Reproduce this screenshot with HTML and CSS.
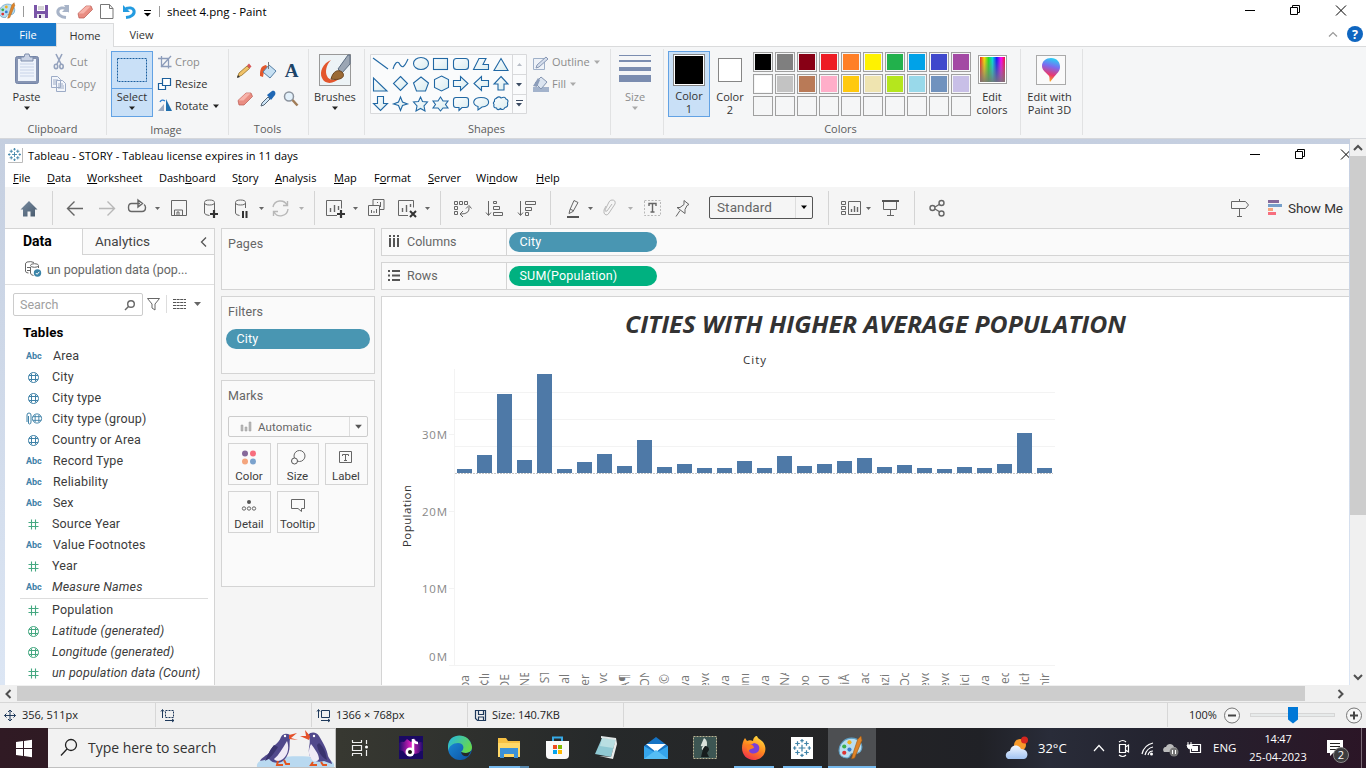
FILE: index.html
```html
<!DOCTYPE html>
<html lang="en">
<head>
<meta charset="utf-8">
<title>sheet 4.png - Paint</title>
<link rel="stylesheet" href="styles.css">
</head>
<body>
<svg class="defs" width="0" height="0">
  <defs>
    <linearGradient id="shapeFill" x1="0" y1="0" x2="1" y2="1"><stop offset="0" stop-color="#fdfeff"/><stop offset="1" stop-color="#d9ecef"/></linearGradient>
    <linearGradient id="rainbow" gradientUnits="userSpaceOnUse" x1="980" x2="1005" y1="0" y2="0"><stop offset="0" stop-color="#e22"/><stop offset=".17" stop-color="#fd0"/><stop offset=".34" stop-color="#2d2"/><stop offset=".5" stop-color="#0dd"/><stop offset=".67" stop-color="#11f"/><stop offset=".84" stop-color="#f0f"/><stop offset="1" stop-color="#e13"/></linearGradient>
    <linearGradient id="greyFade" x1="0" y1="0" x2="0" y2="1"><stop offset="0" stop-color="#888" stop-opacity="0"/><stop offset="1" stop-color="#777" stop-opacity=".9"/></linearGradient>
    <linearGradient id="drop" x1=".6" y1="0" x2=".4" y2="1"><stop offset="0" stop-color="#26d3f5"/><stop offset=".35" stop-color="#7b6cf0"/><stop offset=".7" stop-color="#e8386f"/><stop offset="1" stop-color="#fdb913"/></linearGradient>
    <linearGradient id="home" x1="0" y1="0" x2="1" y2="1"><stop offset="0" stop-color="#7b8ea3"/><stop offset="1" stop-color="#46586b"/></linearGradient>
    <linearGradient id="edgeA" x1="0" y1="0" x2="1" y2=".5"><stop offset="0" stop-color="#23b6e8"/><stop offset="1" stop-color="#66d84f"/></linearGradient>
    <linearGradient id="edgeB" x1="0" y1="0" x2="1" y2="1"><stop offset="0" stop-color="#1c8fdc"/><stop offset="1" stop-color="#0c4fa0"/></linearGradient>
    <linearGradient id="fox" x1=".8" y1="0" x2=".3" y2="1"><stop offset="0" stop-color="#ffe141"/><stop offset=".5" stop-color="#ff8a1e"/><stop offset="1" stop-color="#f0304c"/></linearGradient>
    <linearGradient id="cloud" x1="0" y1="0" x2="0" y2="1"><stop offset="0" stop-color="#f2f7ff"/><stop offset="1" stop-color="#a2c3f1"/></linearGradient>
    <linearGradient id="music"><stop offset="0" stop-color="#1d0b6b"/><stop offset=".5" stop-color="#e01fc0"/><stop offset="1" stop-color="#1d0b6b"/></linearGradient>
    <symbol id="caret" viewBox="0 0 8 5"><path d="M1 .5h6L4 4z"/></symbol>
    <symbol id="globe" viewBox="0 0 13 13"><g fill="none" stroke="currentColor"><circle cx="6.500" cy="6.500" r="5"/><path d="M4.500 2.500v8M8.500 2.500v8M2 4.500h9M2 8.500h9"/></g></symbol>
    <symbol id="hash" viewBox="0 0 13 13"><path d="M4.500 1.500v10M8.500 1.500v10M1.500 4.500h10M1.500 8.500h10" fill="none" stroke="currentColor" stroke-width="1.100"/></symbol>
    <symbol id="palette" viewBox="0 0 24 24"><path d="M13 3C6 3 1 9 1 15c0 5 4 7 8 7 3 0 2-3 4-4 3-1 7 1 9-3 3-6-2-12-9-12z" fill="#b9ddf0" stroke="#5d9dc2"/><circle cx="6" cy="11" r="2" fill="#3caf4a"/><circle cx="11" cy="7" r="2" fill="#f2b01e"/><circle cx="6" cy="17" r="2" fill="#d33"/><circle cx="11" cy="14" r="2" fill="#357fd0"/><path d="M19 4l3-3 1 4-7 17-3 1 1-4z" fill="#df8429" stroke="#9a5a17" stroke-width=".6"/></symbol>
    <symbol id="tab" viewBox="0 0 16 16"><path d="M8 5v6M5 8h6M8 0v3M6.500 1.500h3M8 13v3M6.500 14.500h3M0 8h3M1.500 6.500v3M13 8h3M14.500 6.500v3M4 2v4M2 4h4M12 2v4M10 4h4M4 10v4M2 12h4M12 10v4M10 12h4" fill="none" stroke="#3f83a8" stroke-width="1.100"/></symbol>
    <symbol id="eraser" viewBox="0 0 16 14"><path d="M1 8.500L9 1h5l1.500 3.500L7 13H2z" fill="#e98d82" stroke="#b9574f" stroke-width=".7"/><path d="M1.500 8.500L9 1.300h4.700L6.500 8.500z" fill="#f7b3aa"/></symbol>
  </defs>
</svg>

<header class="titlebar">
  <svg width="165" height="23" viewBox="0 0 165 23">
    <use href="#palette" x="-2" y="2" width="18" height="17"/>
    <path d="M23.500 6v11M159.500 6v11" stroke="#999"/>
    <path d="M34 5h14v13H34z" fill="#7a55a8"/><path d="M37 5h8v6h-8z" fill="#fff"/><path d="M38 7h6M38 9h6" stroke="#aaa"/><path d="M37 14h8v4h-8z" fill="#e8e8ee"/><path d="M39 15h2v3h-2z" fill="#503570"/>
    <path d="M66 17.500c-5-.5-9-3-8-7 1-3 5-3 8-2" fill="none" stroke="#a8b4c8" stroke-width="3"/><path d="M64 5h5v8z" fill="#a8b4c8"/><path d="M62 12h7V5z" fill="#a8b4c8"/>
    <use href="#eraser" x="77" y="5" width="16" height="14"/>
    <path d="M100.500 4.500h9l3.500 4v10h-12.500z" fill="#fff" stroke="#777"/><path d="M109.500 4.500v4h3.500" fill="none" stroke="#777"/>
    <path d="M126 17.500c5-.5 9-3 8-7-1-3-5-3-8-2" fill="none" stroke="#239be0" stroke-width="3"/><path d="M123 5v7h7z" fill="#239be0"/>
    <path d="M144 10.500h7" stroke="#000"/><path d="M144 13h7l-3.500 3.500z"/>
  </svg>
  <span class="doc-title">sheet 4.png - Paint</span>
  <svg class="push" width="121" height="23" viewBox="1245 0 121 23"><g fill="none" stroke="#000"><path d="M1245 10.500h10M1290.500 7.500h7v7h-7zM1292.500 7.500v-2h7v7h-2M1336 5.500l10 10M1346 5.500l-10 10"/></g></svg>
</header>

<nav class="tabs">
  <span class="tab file">File</span><span class="tab home">Home</span><span class="tab view">View</span>
  <svg class="push" width="46" height="23" viewBox="1320 23 46 23"><path d="M1329 36.500l4-4 4 4" fill="none" stroke="#999" stroke-width="1.200"/><circle cx="1355" cy="34" r="8" fill="#0f66c0"/><text x="1355" y="38.500" text-anchor="middle" fill="#fff" font-size="12.500" font-weight="700">?</text></svg>
</nav>

<section class="ribbon">
  <div class="group g-clip">
    <div class="tools">
      <div class="big paste">
        <svg width="36" height="38" viewBox="9 51 36 38"><rect x="15.500" y="56.500" width="23" height="27" rx="2" fill="#8795b3" stroke="#7485a8"/><path d="M18 59h18v22H18z" fill="#eef3fb"/><path d="M20 64h14M20 67h14M20 70h14M20 73h14M20 76h14" stroke="#c8d3e8"/><path d="M21 57h3l1-3h4l1 3h3v4H21z" fill="#c9d2e4" stroke="#7f8eac"/></svg>
        <span>Paste</span><svg class="dn" width="8" height="5"><use href="#caret"/></svg>
      </div>
      <div class="minis">
        <div class="mini off"><svg width="19" height="22" viewBox="51 51 19 22"><path d="M56 54l5 10M62 54l-5 10" stroke="#94a2bd" stroke-width="1.600"/><g fill="none" stroke="#94a2bd" stroke-width="1.600"><ellipse cx="56" cy="66.500" rx="1.700" ry="2.200"/><ellipse cx="61.500" cy="66.500" rx="1.700" ry="2.200"/></g></svg>Cut</div>
        <div class="mini off"><svg width="19" height="22" viewBox="51 73 19 22"><g fill="#f3f6fb" stroke="#9cabc6"><path d="M51.500 76.500h6l3 3v8h-9zM56.500 80.500h6l3 3v8h-9z"/><path d="M53 80h5M53 82h3M53 84h3M58 84h5M58 86h6M58 88h6"/></g></svg>Copy</div>
      </div>
    </div>
    <div class="cap">Clipboard</div>
  </div>
  <div class="group g-image">
    <div class="tools">
      <div class="big select">
        <svg width="40" height="37" viewBox="112 52 40 37"><path d="M112 88.500h40" stroke="#62a2e4"/><rect x="117.500" y="58.500" width="29" height="23" fill="none" stroke="#1a5f9e" stroke-dasharray="2 1"/></svg>
        <span>Select</span><svg class="dn" width="8" height="5"><use href="#caret"/></svg>
      </div>
      <div class="minis">
        <div class="mini off"><svg width="18" height="22" viewBox="157 51 18 22"><path d="M161.500 56v10.500h10M158 58.500h10.500v10M161 67l10-11" fill="none" stroke="#8c9cba" stroke-width="1.300"/></svg>Crop</div>
        <div class="mini"><svg width="18" height="22" viewBox="157 73 18 22"><path d="M162.500 78.500h8v7h-8zM158.500 83.500h4v2h3v4h-7z" fill="#fff" stroke="#1c5f9c" stroke-width="1.200"/></svg>Resize</div>
        <div class="mini"><svg width="18" height="22" viewBox="157 95 18 22"><path d="M158 111l6-7v7z" fill="#9aa9c0"/><path d="M166 111v-12l6 12z" fill="#1f6fae"/><path d="M160 102c1-2 3-2.500 5-1" stroke="#2c7fd0" fill="none" stroke-width="1.400"/></svg>Rotate<svg class="dn r" width="8" height="5"><use href="#caret"/></svg></div>
      </div>
    </div>
    <div class="cap">Image</div>
  </div>
  <div class="group g-tools">
    <svg class="block" width="79" height="73" viewBox="229 47 79 73">
      <path d="M237.500 77l1.500-4 8-7 2.500 2.500-8 7z" fill="#f0c268" stroke="#946f26" stroke-width=".8"/><path d="M247 65.500l2.500 3 2-2-2.500-3z" fill="#d75757"/><path d="M237 78l1-3 2 2z" fill="#333"/>
      <path d="M260 76c0-7 1-10 6-11l2 3c-4 1-4 4-5 9z" fill="#e2582c"/><path d="M269 65l7 6-6 7-7-6z" fill="#c6e0f3" stroke="#557fa5"/><path d="M268.500 62v7" stroke="#777"/>
      <text x="291.500" y="77" text-anchor="middle" font-family="Liberation Serif" font-weight="700" font-size="19" fill="#1d4468">A</text>
      <use href="#eraser" x="237" y="92" width="16" height="14"/>
      <path d="M261 106l1-3 6-6 2 2-6 6z" fill="#cde5f7" stroke="#567"/><path d="M267 95l5-4c3-1 4 2 3 4l-4 5z" fill="#1f67b4"/>
      <circle cx="289" cy="96.500" r="4.500" fill="#e3f1fb" stroke="#8b939e" stroke-width="1.500"/><path d="M292.500 100l5 5.500" stroke="#a07c58" stroke-width="2.500"/>
    </svg>
    <div class="cap">Tools</div>
  </div>
  <div class="group g-brush">
    <div class="big">
      <svg width="36" height="38" viewBox="317 51 36 38"><rect x="319.500" y="54.500" width="31" height="31" fill="#edf3f6" stroke="#999"/><path d="M331 60c-8 3-12 12-9 18 3 7 12 6 18 0-5 2-11 3-13-2-2-4-1-11 4-16z" fill="#e3562d"/><path d="M338 69l10-14h2v9l-8 9z" fill="#9ba6b4" stroke="#5c6d81"/><path d="M331 79c2-8 7-10 11-7 4 4 0 9-11 7z" fill="#9b6a35" stroke="#6b4520"/></svg>
      <span>Brushes</span><svg class="dn" width="8" height="5"><use href="#caret"/></svg>
    </div>
    <div class="cap"></div>
  </div>
  <div class="group g-shapes">
    <div class="tools">
      <svg class="block" width="157" height="69" viewBox="370 51 157 69">
        <path d="M370.500 54.500h156v59h-156zM512.500 54.500v59M512.500 74.500h14M512.500 94.500h14" fill="#fafbfc" stroke="#d8d9db"/>
        <g fill="url(#shapeFill)" stroke="#2168a4" stroke-width="1.100">
          <path d="M373 58l15 11"/><path d="M393 69c2-6 4-8 6-6 3 6 5 5 9-4" fill="none"/><ellipse cx="421" cy="63.500" rx="7.500" ry="6"/><rect x="433.500" y="58.500" width="14" height="11"/><rect x="453.500" y="58.500" width="15" height="11" rx="3"/><path d="M479 58.500h7l-3 6h5.500v5h-15z"/><path d="M501 58.500l7 12h-14z"/>
          <path d="M373.500 78v13h13.500z"/><path d="M400.500 76.500l7 7-7 7-7-7z"/><path d="M421 77l7.500 6-3 8h-9l-3-8z"/><path d="M441.500 76l7 3.500v8l-7 3.500-7-3.500v-8z"/><path d="M453.500 80.500h7v-4l7.500 7-7.500 7v-4h-7z"/><path d="M488.500 80.500h-7v-4l-7.500 7 7.500 7v-4h7z"/><path d="M501 76.500l7 7.500h-4v6h-6v-6h-4z"/>
          <path d="M377.500 96.500h6v7h4l-7 7-7-7h4z"/><path d="M400.500 97l2 5 5 2-5 1.500-2 5-2-5-5-1.500 5-2z"/><path d="M420.500 97l2 4.500 5 .5-3.500 4 1 5-4.500-2.500L416 111l1-5-3.500-4 5-.5z"/><path d="M440.500 97l2.500 4h5l-2.500 3.500 2.500 3.500h-5l-2.500 3-2.500-3h-5l2.500-3.500L433 101h5z"/><path d="M456 97.500h10q2.500 0 2.500 2.500v5q0 2.500-2.500 2.500h-4l-3 3v-3h-3q-2.500 0-2.500-2.500v-5q0-2.500 2.500-2.500z"/><path d="M481 97.500c10 0 10 9 1 9.500l-4 3v-3.500c-7-2-5-9 3-9z"/><path d="M496 98.500q3-3 5-.5 4-2 5 1 3 1 1.500 4 1 4-2.500 4.500-2 3.500-4.500 1-3 2.500-4-.5-3.500 0-2.500-3.500-1.500-2 .500-3-.5-3 2-3z"/>
        </g>
        <path d="M517 66h5l-2.500-3z" fill="#b7bdc6"/><path d="M516 83h6l-3 3.500zM516 103h6l-3 3.500zM516 100h7v1h-7z" fill="#3c4c63"/>
      </svg>
      <div class="minis">
        <div class="mini off"><svg width="20" height="22" viewBox="532 51 20 22"><path d="M533.500 58.500h11v11h-11z" fill="#eef2f8" stroke="#9fb0c8"/><path d="M536 68l1-3 9-8 2 2-9 8z" fill="#d5deec" stroke="#8797b4"/></svg>Outline<svg class="dn r" width="8" height="5"><use href="#caret"/></svg></div>
        <div class="mini off"><svg width="20" height="22" viewBox="532 73 20 22"><path d="M533 87h16v5h-16z" fill="#a3b3cc"/><path d="M541 77l6 5-6 7-6-6z" fill="#dbe4f0" stroke="#8394b0"/><path d="M533 86l5-8 2 2-3 7z" fill="#8c9dba"/></svg>Fill<svg class="dn r" width="8" height="5"><use href="#caret"/></svg></div>
      </div>
    </div>
    <div class="cap">Shapes</div>
  </div>
  <div class="group g-size">
    <div class="big off">
      <svg width="36" height="38" viewBox="618 51 36 38"><path d="M620 55h32v1h-32zM620 60h32v2h-32zM620 67h32v4h-32zM620 75h32v7h-32z" fill="#7b8db0"/></svg>
      <span>Size</span><svg class="dn" width="8" height="5"><use href="#caret"/></svg>
    </div>
    <div class="cap"></div>
  </div>
  <div class="group g-colors">
    <div class="tools">
      <div class="big c1"><i class="swatch s1"></i><span>Color<br>1</span></div>
      <div class="big c2"><i class="swatch s2"></i><span>Color<br>2</span></div>
      <div class="palette">
        <i class="k0"></i><i class="k1"></i><i class="k2"></i><i class="k3"></i><i class="k4"></i><i class="k5"></i><i class="k6"></i><i class="k7"></i><i class="k8"></i><i class="k9"></i>
        <i class="l0"></i><i class="l1"></i><i class="l2"></i><i class="l3"></i><i class="l4"></i><i class="l5"></i><i class="l6"></i><i class="l7"></i><i class="l8"></i><i class="l9"></i>
        <i></i><i></i><i></i><i></i><i></i><i></i><i></i><i></i><i></i><i></i>
      </div>
      <div class="big edit">
        <svg width="36" height="38" viewBox="974 51 36 38"><rect x="978.500" y="55.500" width="28" height="28" fill="#fff" stroke="#a0a0a0"/><path d="M980 57h25v25h-25z" fill="url(#rainbow)"/><path d="M980 57h25v25h-25z" fill="url(#greyFade)"/></svg>
        <span>Edit<br>colors</span>
      </div>
    </div>
    <div class="cap">Colors</div>
  </div>
  <div class="group g-3d">
    <div class="big">
      <svg width="36" height="38" viewBox="1031 51 36 38"><rect x="1035.500" y="55.500" width="29" height="29" fill="#fafafa" stroke="#aaa"/><path d="M1050 58c6 0 9 4 9 9s-4 7-6 10l-4 5c-1-2 0-4-1-6-2-3-7-5-7-10s4-8 9-8z" fill="url(#drop)"/></svg>
      <span>Edit with<br>Paint 3D</span>
    </div>
    <div class="cap"></div>
  </div>
</section>

<div class="workspace">
  <main class="app">
    <div class="app-title">
      <svg width="23" height="23" viewBox="5 144 23 23"><path d="M22.500 148v14.500H8" fill="none" stroke="#bbb"/><use href="#tab" x="8" y="148" width="13" height="13"/></svg>
      <span>Tableau - STORY - Tableau license expires in 11 days</span>
      <svg class="push" width="104" height="23" viewBox="1245 144 104 23"><g fill="none" stroke="#000"><path d="M1250 154.500h10M1295.500 151.500h7v7h-7zM1297.500 151.500v-2h7v7h-2M1341 149.500l10 10M1341 159.500l10-10"/></g></svg>
    </div>
    <div class="menu"><span><u>F</u>ile</span><span><u>D</u>ata</span><span><u>W</u>orksheet</span><span>Dash<u>b</u>oard</span><span>S<u>t</u>ory</span><span><u>A</u>nalysis</span><span><u>M</u>ap</span><span>F<u>o</u>rmat</span><span><u>S</u>erver</span><span>Wi<u>n</u>dow</span><span><u>H</u>elp</span></div>
    <div class="toolbar">
      <svg width="47" height="41" viewBox="5 187 47 41"><path d="M20.500 209.500L29 201l8.500 8.500H35v7h-4.500v-5h-3v5H23v-7z" fill="url(#home)"/></svg>
      <i class="sep"></i>
      <svg width="38" height="41" viewBox="53 187 38 41"><path d="M83 208.500H68M74.500 201.500l-7 7 7 7" class="ln b"/></svg>
      <svg width="32" height="41" viewBox="91 187 32 41"><path d="M99 208.500h15M107.500 201.500l7 7-7 7" class="ln dim b"/></svg>
      <svg width="44" height="41" viewBox="123 187 44 41"><path d="M140 203.500h-8.500q-3 0-3 4t3 4h10.500q3.500 0 3.500-4 0-2-1.500-3M138 200l4.500 3.500-4.500 3.500z" class="ln b"/><path d="M155 207h5l-2.500 3z" class="fl"/></svg>
      <svg width="28" height="41" viewBox="167 187 28 41"><path d="M171.500 200.500h15v15h-15zM174.500 215v-5h8v5M177 215v-3h2v3" class="ln"/></svg>
      <svg width="32" height="41" viewBox="195 187 32 41"><path d="M204.500 203v10q0 2 5 2.500M214.500 203v7" class="ln"/><ellipse cx="209.500" cy="202.500" rx="5" ry="2.500" class="ln"/><path d="M214 210v8M210 214h8" stroke="#333" stroke-width="2.200"/></svg>
      <svg width="41" height="41" viewBox="227 187 41 41"><path d="M235.500 203v10q0 2 4 2.500M245.500 203v5" class="ln"/><ellipse cx="240.500" cy="202.500" rx="5" ry="2.500" class="ln"/><path d="M243 211v7M246.500 211v7" stroke="#333" stroke-width="2"/><path d="M259 207h5l-2.500 3z" class="fl"/></svg>
      <svg width="46" height="41" viewBox="268 187 46 41"><path d="M273 207a7.500 7.500 0 0 1 14-2M288 209a7.500 7.500 0 0 1-14 3M287.500 201v4.500H283M273.500 216v-4.500h4.500" class="ln dim b"/><path d="M299 207h5l-2.500 3z" class="fl dimf"/></svg>
      <i class="sep"></i>
      <svg width="45" height="41" viewBox="315 187 45 41"><path d="M337 215.500h-10.500v-15h15v8" class="ln"/><path d="M330.500 212v-4M334.500 212v-7M338.500 210v-4" class="ln b"/><path d="M341 210v8M337 214h8" stroke="#333" stroke-width="2.200"/><path d="M353 207h5l-2.500 3z" class="fl"/></svg>
      <svg width="32" height="41" viewBox="360 187 32 41"><path d="M373 205v-5.500h11v10h-4M368.500 205.500h11v10h-11zM371.500 213v-3M374 213v-2M376.500 213v-4M377.500 203v-1M380.500 207v-5" class="ln"/></svg>
      <svg width="48" height="41" viewBox="392 187 48 41"><path d="M408 215.500h-9.500v-15h15v7" class="ln"/><path d="M402.500 212v-4M406.500 212v-7M410.500 207v-3" class="ln b"/><path d="M410 211l6 6M416 211l-6 6" stroke="#333" stroke-width="2"/><path d="M425 207h5l-2.500 3z" class="fl"/></svg>
      <i class="sep"></i>
      <svg width="37" height="41" viewBox="441 187 37 41"><path d="M454.500 201.500h3v3h-3zM459.500 201.500h3v3h-3zM464.500 201.500h3v3h-3zM454.500 206.500h3v3h-3zM454.500 211.500h3v3h-3zM469 207q1 7-8 7M466 208.500l3-3 2.500 3M463 211l-3 3 3 3" class="ln"/></svg>
      <svg width="33" height="41" viewBox="478 187 33 41"><path d="M488.500 201v14M486 212.500l2.500 3 2.500-3M493.500 201.500h3v2h-3zM493.500 206.500h6v3h-6zM493.500 212.500h9v3h-9z" class="ln"/></svg>
      <svg width="39" height="41" viewBox="511 187 39 41"><path d="M520.500 201v14M518 212.500l2.500 3 2.500-3M525.500 201.500h10v3h-10zM525.500 207.500h6v3h-6zM525.500 212.500h3v3h-3z" class="ln"/></svg>
      <i class="sep"></i>
      <svg width="45" height="41" viewBox="551 187 45 41"><path d="M569 213.500l1-4 4-9 4 2-5 9zM570 209l4 2" class="ln"/><path d="M567 217h12" stroke="#555" stroke-width="2"/><path d="M588 207h5l-2.500 3z" class="fl"/></svg>
      <svg width="42" height="41" viewBox="596 187 42 41"><path d="M606 206l-2 4q-1 4 2 5 2 0 3-2l6-9q1-4-3-4-2 0-3 2l-4 8q0 2 2 1l5-7" class="ln dim"/><path d="M628 207h5l-2.500 3z" class="fl dimf"/></svg>
      <svg width="28" height="41" viewBox="638 187 28 41"><rect x="644.500" y="200.500" width="16" height="15" class="ln dim" stroke-dasharray="2 1.500"/><path d="M649 206v-2.500h7v2.500M652.500 203.500v8.500M650.500 212h4" class="ln b"/></svg>
      <svg width="43" height="41" viewBox="666 187 43 41"><path d="M684 200.500l5 4-2 1-2 4v4l-8-6h3l4-3zM680 210.500l-4 6" class="ln"/></svg>
      <div class="fit"><span>Standard</span><i><svg width="8" height="5"><use href="#caret"/></svg></i></div>
      <i class="sep fitsep"></i>
      <svg width="49" height="41" viewBox="829 187 49 41"><path d="M841.500 201.500h4v3h-4zM841.500 206.500h4v3h-4zM841.500 211.500h4v3h-4zM848.500 201.500h12v13h-12z" class="ln"/><path d="M851.500 212v-3M854.500 212v-6M857.500 212v-5" class="ln b"/><path d="M866 207h5l-2.500 3z" class="fl"/></svg>
      <svg width="36" height="41" viewBox="878 187 36 41"><path d="M882 201h17" stroke="#555" stroke-width="2"/><path d="M883.500 202v7.500h13v-7.500M890.500 210v5M887 215.500h7" class="ln"/></svg>
      <i class="sep"></i>
      <svg width="45" height="41" viewBox="915 187 45 41"><path d="M935 207l5-3M935 209l5 3" class="ln b"/><g class="ln b"><circle cx="932.500" cy="208" r="2.500"/><circle cx="941.500" cy="203" r="2.500"/><circle cx="941.500" cy="213.500" r="2.500"/></g></svg>
      <svg class="push" width="61" height="41" viewBox="1227 187 61 41"><path d="M1239.500 199v2.500M1231.500 201.500h14l3 3.500-3 3.500h-14zM1239.500 209v7M1237 216.500h5" class="ln"/><path d="M1268 200h11v3h-11z" fill="#86699a"/><path d="M1268 204h14v3h-14z" fill="#769fca"/><path d="M1268 208h5v3h-5z" fill="#f4a57d"/><path d="M1268 212h8v3h-8z" fill="#f76e7e"/></svg>
      <span class="showme">Show Me</span>
    </div>

    <div class="body">
      <aside class="data">
        <div class="dtabs"><b>Data</b><span>Analytics<svg width="9" height="12" viewBox="0 0 9 12"><path d="M6 1.500L1.500 6 6 10.500" fill="none" stroke="#555" stroke-width="1.300"/></svg></span></div>
        <div class="source"><svg width="42" height="29" viewBox="5 255 42 29"><path d="M25.500 264v7q0 2 3 2M34 262.500q-3-1.500-7-.500-2 1-1.500 2.500M30.500 267v6q0 2 3 2.500M38.500 268v-2M27 267.500h3M27 270.500h3" class="ln"/><ellipse cx="34.500" cy="265.500" rx="4" ry="1.800" class="ln"/><circle cx="37.500" cy="273" r="3.700" fill="#3b84a8"/><path d="M35.800 273l1.300 1.300 2.200-2.500" stroke="#fff" fill="none"/></svg>un population data (pop...</div>
        <div class="find">
          <div class="search">Search<svg width="12" height="12" viewBox="0 0 12 12"><circle cx="7" cy="5" r="3.300" class="ln b"/><path d="M4.500 7.500L1 11" class="ln b"/></svg></div>
          <svg width="65" height="23" viewBox="143 293 65 23"><path d="M147.500 298.500h12l-4.500 5.500v6l-3-2v-4z" class="ln"/><path d="M166.500 295v18" stroke="#ddd"/><path d="M173 299.500h13M173 302.500h13M173 305.500h13M173 308.500h13" stroke="#555" stroke-dasharray="3 .6"/><path d="M194 302h7l-3.500 4z" class="fl"/></svg>
        </div>
        <h2>Tables</h2>
        <ul class="fields">
          <li><em>Abc</em>Area</li>
          <li><svg width="13" height="13"><use href="#globe"/></svg>City</li>
          <li><svg width="13" height="13"><use href="#globe"/></svg>City type</li>
          <li><svg class="wide" width="17" height="13" viewBox="0 0 17 13"><path d="M1 10V3q0-2 2-2t2 2v7q0 2-1.500 2T2.500 10V4" fill="none" stroke="currentColor"/><use href="#globe" x="5" y="0" width="12" height="13"/></svg>City type (group)</li>
          <li><svg width="13" height="13"><use href="#globe"/></svg>Country or Area</li>
          <li><em>Abc</em>Record Type</li>
          <li><em>Abc</em>Reliability</li>
          <li><em>Abc</em>Sex</li>
          <li class="m"><svg width="13" height="13"><use href="#hash"/></svg>Source Year</li>
          <li><em>Abc</em>Value Footnotes</li>
          <li class="m"><svg width="13" height="13"><use href="#hash"/></svg>Year</li>
          <li><em>Abc</em><i>Measure Names</i></li>
        </ul>
        <ul class="fields measures">
          <li class="m"><svg width="13" height="13"><use href="#hash"/></svg>Population</li>
          <li class="m"><svg width="13" height="13"><use href="#globe"/></svg><i>Latitude (generated)</i></li>
          <li class="m"><svg width="13" height="13"><use href="#globe"/></svg><i>Longitude (generated)</i></li>
          <li class="m"><svg width="13" height="13"><use href="#hash"/></svg><i>un population data (Count)</i></li>
        </ul>
      </aside>

      <div class="cards">
        <div class="card pages">Pages</div>
        <div class="card filters">Filters<div class="pill">City</div></div>
        <div class="card marks">Marks
          <div class="mtype"><svg width="13" height="12" viewBox="0 0 13 12"><path d="M1 4h2v6H1zM5 6h2v4H5zM9 1h2v9H9z" fill="#bbb" stroke="#999" stroke-width=".5"/></svg><span>Automatic</span><i><svg width="9" height="6"><use href="#caret"/></svg></i></div>
          <div class="mgrid">
            <div><svg width="20" height="17" viewBox="0 0 20 17"><circle cx="6" cy="3.500" r="3" fill="#86699a"/><circle cx="14" cy="3.500" r="3" fill="#f76e7e"/><circle cx="6" cy="11.500" r="3" fill="#f4a57d"/><circle cx="14" cy="11.500" r="3" fill="#7ba2cd"/></svg>Color</div>
            <div><svg width="20" height="17" viewBox="0 0 20 17"><circle cx="11.500" cy="6" r="5.500" class="ln"/><circle cx="6.500" cy="11" r="3" fill="#fafafa" stroke="#555"/></svg>Size</div>
            <div><svg width="20" height="17" viewBox="0 0 20 17"><path d="M3.500 1.500h12v11h-12zM6.500 6V4.500h6V6M9.500 4.500v6M8 10.500h3" class="ln"/></svg>Label</div>
            <div><svg width="20" height="17" viewBox="0 0 20 17"><circle cx="10" cy="4" r="2" fill="#555"/><g class="ln"><circle cx="5" cy="10.500" r="1.700"/><circle cx="10" cy="10.500" r="1.700"/><circle cx="15" cy="10.500" r="1.700"/></g></svg>Detail</div>
            <div><svg width="20" height="17" viewBox="0 0 20 17"><path d="M3.500 1.500h13v9h-3v3l-3.500-3H3.500z" class="ln"/></svg>Tooltip</div>
          </div>
        </div>
      </div>

      <div class="sheet">
        <div class="shelf"><div><svg width="25" height="26" viewBox="382 229 25 26"><path d="M390 235v2M390 238v9M394 235v2M394 238v9M398 235v2M398 238v9" stroke="#555" stroke-width="2"/></svg>Columns</div><span class="pill">City</span></div>
        <div class="shelf"><div><svg width="25" height="26" viewBox="382 263 25 26"><path d="M388 271h2M392 271h8M388 275.500h2M392 275.500h8M388 280h2M392 280h8" stroke="#555" stroke-width="1.800"/></svg>Rows</div><span class="pill green">SUM(Population)</span></div>
        <div class="viz">
          <svg class="block" width="967" height="388" viewBox="382 297 967 388">
            <text x="625" y="332.500" class="vt" textLength="501" lengthAdjust="spacingAndGlyphs">CITIES WITH HIGHER AVERAGE POPULATION</text>
            <text x="743" y="364" class="vl" textLength="23">City</text>
            <path d="M454.500 369v296M449 665.500h606M455 392.500h600M455 419.500h600M455 446.500h600M449 434.500h5M449 511.500h5M449 588.500h5" stroke="#f3f3f3" fill="none"/>
            <g fill="#4e79a7">
              <path d="M457 469h15v4h-15zM477 455h15v18h-15zM497 394h15v79h-15zM517 460h15v13h-15zM537 374h15v99h-15zM557 469h15v4h-15zM577 462h15v11h-15zM597 454h15v19h-15zM617 466h15v7h-15zM637 440h15v33h-15z"/>
              <path d="M657 467h15v6h-15zM677 464h15v9h-15zM697 468h15v5h-15zM717 468h15v5h-15zM737 461h15v12h-15zM757 468h15v5h-15zM777 456h15v17h-15zM797 466h15v7h-15zM817 464h15v9h-15zM837 461h15v12h-15z"/>
              <path d="M857 458h15v15h-15zM877 467h15v6h-15zM897 465h15v8h-15zM917 468h15v5h-15zM937 469h15v4h-15zM957 467h15v6h-15zM977 468h15v5h-15zM997 464h15v9h-15zM1017 433h15v40h-15zM1037 468h15v5h-15z"/>
            </g>
            <path d="M455 473.500h598" stroke="#c3c3c3" stroke-dasharray="2 1"/>
            <g class="ax" text-anchor="end"><text x="447" y="439" textLength="25">30M</text><text x="447" y="516" textLength="25">20M</text><text x="447" y="593" textLength="25">10M</text><text x="447" y="661" textLength="18">0M</text></g>
            <text class="vl" transform="translate(411 547) rotate(-90)" textLength="62">Population</text>
            <svg x="455" y="673" width="600" height="12" viewBox="455 673 600 12">
              <g class="xl" text-anchor="end">
                <text transform="translate(469 675) rotate(-90)">pa</text><text transform="translate(489 673) rotate(-90)">¢lı</text><text transform="translate(509 674) rotate(-90)">DE</text><text transform="translate(529 671) rotate(-90)">NE</text><text transform="translate(549 670) rotate(-90)">ST</text><text transform="translate(569 674) rotate(-90)">al</text><text transform="translate(589 674) rotate(-90)">er</text><text transform="translate(607 670) rotate(-90)">vo</text><text transform="translate(629 674) rotate(-90)">A¶</text><text transform="translate(649 669) rotate(-90)">ON</text>
                <text transform="translate(669 674) rotate(-90)">©</text><text transform="translate(689 675) rotate(-90)">va</text><text transform="translate(709 669) rotate(-90)">evo</text><text transform="translate(729 675) rotate(-90)">va</text><text transform="translate(749 673) rotate(-90)">ını</text><text transform="translate(769 675) rotate(-90)">va</text><text transform="translate(789 669) rotate(-90)">NA</text><text transform="translate(809 675) rotate(-90)">po</text><text transform="translate(829 675) rotate(-90)">ol</text><text transform="translate(849 674) rotate(-90)">iÅ</text>
                <text transform="translate(869 670) rotate(-90)">ad</text><text transform="translate(889 674) rotate(-90)">azi</text><text transform="translate(909 669) rotate(-90)">Oci</text><text transform="translate(929 669) rotate(-90)">evo</text><text transform="translate(949 669) rotate(-90)">evo</text><text transform="translate(969 674) rotate(-90)">ici</text><text transform="translate(989 675) rotate(-90)">va</text><text transform="translate(1009 670) rotate(-90)">ed</text><text transform="translate(1029 669) rotate(-90)">ich</text><text transform="translate(1049 673) rotate(-90)">nir</text>
              </g>
            </svg>
          </svg>
        </div>
      </div>
    </div>
  </main>
  <div class="vscroll"><svg width="16" height="17" viewBox="0 0 16 17"><path d="M4 11l4-4 4 4" fill="none" stroke="#505050" stroke-width="2"/></svg><i></i><svg class="down" width="16" height="17" viewBox="0 0 16 17"><path d="M4 6l4 4 4-4" fill="none" stroke="#505050" stroke-width="2"/></svg></div>
</div>
<div class="hscroll"><svg width="17" height="17" viewBox="0 0 17 17"><path d="M10.500 5L6.500 9l4 4" fill="none" stroke="#505050" stroke-width="2"/></svg><i></i><svg class="push" width="34" height="17" viewBox="0 0 34 17"><path d="M6.500 5l4 4-4 4" fill="none" stroke="#505050" stroke-width="2"/></svg></div>

<footer class="status">
  <div><svg width="22" height="25" viewBox="0 703 22 25"><path d="M10 710v11M4.500 715.500h11M8 712l2-2 2 2M8 719l2 2 2-2M6.500 713.500l-2 2 2 2M13.500 713.500l2 2-2 2" fill="none" stroke="#1e395b"/></svg>356, 511px</div>
  <div><svg width="26" height="25" viewBox="156 703 26 25"><path d="M162.500 710v8M161 711.500l1.500-2 1.500 2M165 720.500h9M172 719l2 1.500-2 1.500" fill="none" stroke="#1e395b"/><rect x="165.500" y="710.500" width="8" height="7" fill="none" stroke="#1e395b" stroke-dasharray="2 1"/></svg></div>
  <div><svg width="25" height="25" viewBox="312 703 25 25"><path d="M318.500 710v8M317 711.500l1.500-2 1.500 2M321 720.500h9M328 719l2 1.500-2 1.500M321.500 710.500h8v7h-8z" fill="none" stroke="#1e395b"/></svg><span class="dims">1366 × 768px</span></div>
  <div><svg width="24" height="25" viewBox="468 703 24 25"><path d="M475.500 710.500h10v10h-8l-2-2zM478.500 710.500v4h5v-4M478.500 720v-3h5v3" fill="none" stroke="#1e395b" stroke-width="1.200"/></svg>Size: 140.7KB</div>
  <div class="zoom"><span>100%</span><svg width="149" height="25" viewBox="1217 703 149 25"><g fill="#f6f6f6" stroke="#777"><circle cx="1232" cy="715.500" r="7.500"/><circle cx="1354" cy="715.500" r="7.500"/></g><path d="M1228 715.500h8M1350 715.500h8M1354 711.500v8" stroke="#444" stroke-width="2"/><rect x="1250.500" y="713.500" width="84" height="3" fill="#e7eaea" stroke="#d6d6d6"/><path d="M1288 707h10v12.500l-5 4-5-4z" fill="#0078d7"/></svg></div>
</footer>

<footer class="taskbar">
  <svg width="48" height="40" viewBox="0 728 48 40"><path d="M16 742l7-1v7h-7zM24 740.900l8-1.200V748h-8zM16 749h7v7l-7-1zM24 749h8v8.200l-8-1.200z" fill="#fff"/></svg>
  <div class="tsearch">
    <svg width="40" height="38" viewBox="48 729 40 38"><circle cx="71" cy="745" r="5.500" fill="none" stroke="#222" stroke-width="1.300"/><path d="M67 749l-6 6.500" stroke="#222" stroke-width="1.300"/></svg>
    <span>Type here to search</span>
    <svg class="push" width="80" height="38" viewBox="254 729 80 38">
      <path d="M256 767c-1-6 6-8 16-9 20-3 44-2 54 1 6 2 8 5 7 8z" fill="#b9d9f0"/>
      <path d="M289 735c-3-2-7-2-9 2-3 8-9 8-12 16-2 2-8 5-9 8l9-2c5 6 14 5 18-3 4-7 2-13 3-17z" fill="#51498c"/><path d="M286 741c2 5 2 13-4 18-4 3-8 2-9 0 5-4 8-10 13-18z" fill="#efeaf6"/><path d="M273 745c-5 6-7 12-9 16 6-3 9-8 13-14z" fill="#39336e"/><path d="M288 735l8-2-6 5 7 2-9-1z" fill="#e5512a"/><circle cx="284" cy="736" r="1.200" fill="#fff"/><path d="M277 761l-1 4h6M283 760l2 4h4" fill="none" stroke="#e2551f" stroke-width="2"/>
      <path d="M307 735c3-4 9-3 11 1 4 7 8 13 9 20 1 3 4 5 4 8l-8-3c-6 2-14 0-15-8-1-7 3-11-1-18z" fill="#51498c"/><path d="M310 744c-3 6-3 12 2 17 3 1 5 0 6-2 0-5-5-11-8-15z" fill="#efeaf6"/><path d="M318 743c6 5 7 12 8 17-6-3-9-9-10-15z" fill="#39336e"/><path d="M309 736l-5-6 1 6-6 0 9 4z" fill="#e5512a"/><circle cx="313" cy="736" r="1.200" fill="#fff"/><path d="M312 762l-2 3h6M320 762l2 3h4" fill="none" stroke="#e2551f" stroke-width="2"/>
    </svg>
  </div>
  <svg width="49" height="40" viewBox="336 728 49 40"><path d="M352 742.500h10M352 753.500h10M352.500 745.500h9v5h-9zM352.500 740v2M361.500 740v2M352.500 754v2M361.500 754v2M366.500 740v4M366.500 750v6" fill="none" stroke="#eee" stroke-width="1.200"/><circle cx="366.500" cy="747" r="1.500" fill="#fff"/></svg>
  <svg width="50" height="40" viewBox="385 728 50 40"><path d="M399 736h24v23h-24z" fill="#1a0963"/><path d="M399 743q3-2 5-1l3-3 4 3 4-3 3 4q3-2 5 0v8q-3-1-4 2l-4 1-4-2-5 3-3-4-4-1z" fill="url(#music)"/><circle cx="410" cy="752" r="4.500" fill="#fff"/><circle cx="410" cy="752" r="2" fill="#111"/><path d="M413 739v12M413 739q1 4 5 4" fill="none" stroke="#fff" stroke-width="2.500"/></svg>
  <svg width="49" height="40" viewBox="435 728 49 40"><circle cx="460" cy="748" r="12" fill="url(#edgeB)"/><path d="M448 746c1-14 22-14 24 1 0 6-6 7-11 5 4-3 3-9-3-9-5 0-9 3-10 8z" fill="url(#edgeA)"/><path d="M461 752c4 2 8 1 10-1l-3 5c-3 1-6 0-7-4z" fill="#262829"/></svg>
  <svg width="49" height="40" viewBox="484 728 49 40"><path d="M498 738h8l2 3h12v16h-22z" fill="#f6c043"/><path d="M498 743h22v14h-22z" fill="#ffd868"/><path d="M500 748h18v10h-4v-4h-10v4h-4z" fill="#3b91d8"/><path d="M489 766h31v2h-31z" fill="#76b9ed"/><path d="M520 766h9v2h-9z" fill="#5788ae"/></svg>
  <svg width="49" height="40" viewBox="533 728 49 40"><path d="M553 741v-3.500h9v3.500" fill="none" stroke="#36a9e6" stroke-width="2"/><path d="M546 741h23v14q0 4-4 4h-15q-4 0-4-4z" fill="#fafafa"/><path d="M553 745h4v4h-4z" fill="#f04e23"/><path d="M558 745h4v4h-4z" fill="#80bb01"/><path d="M553 750h4v4h-4z" fill="#03a5f0"/><path d="M558 750h4v4h-4z" fill="#ffb902"/></svg>
  <svg width="49" height="40" viewBox="582 728 49 40"><path d="M602 738l14 1-5 18-16-3z" fill="#8fc9d3"/><path d="M602 738l14 1-3 9-13-2z" fill="#b9dfe2"/><path d="M601 736l15 2v2l-15-2z" fill="#dfe6e6"/><path d="M616 738l1 6-4 15-14-3 12 1z" fill="#e9eceb"/></svg>
  <svg width="50" height="40" viewBox="631 728 50 40"><path d="M644 746l12-9 12 9v13h-24z" fill="#1573c4"/><path d="M646 744h20l-10 8z" fill="#fff"/><path d="M644 746l12 7 12-7v13h-24z" fill="#35a5ec"/><path d="M644 759l12-9 12 9z" fill="#55bdf5"/></svg>
  <svg width="49" height="40" viewBox="681 728 49 40"><path d="M693.500 736.500h23v22h-23z" fill="#3d5653" stroke="#b9b394" stroke-dasharray="2 1"/><path d="M704 738q5 3 2 11l-4 1q-1-2 1-4-3 1-2-1z" fill="#dbe3dc"/><path d="M705 746q4 0 4 4l-2 3 2 4h-8l1-4q0-4 3-7z" fill="#161d1d"/></svg>
  <svg width="49" height="40" viewBox="730 728 49 40"><path d="M742 748c0-4 1-7 3-10l2 3c2-1 4-1 6 0 0-3 2-5 4-5 1 3 3 3 6 6 6 8 0 18-9 18-7 0-12-5-12-12z" fill="url(#fox)"/><path d="M748 747c2-3 5-3 6-4 5 1 6 4 5 7-1 4-8 5-10 1z" fill="#7a40d9"/><path d="M746 745c4-2 8 0 8 3-3 1-5 1-6 4z" fill="#ff7d20"/><path d="M734 766h40v2h-40z" fill="#76b9ed"/></svg>
  <svg width="49" height="40" viewBox="779 728 49 40"><path d="M791 737h22v22h-22z" fill="#fff"/><use href="#tab" x="793" y="739" width="18" height="18"/><path d="M783 766h39v2h-39z" fill="#76b9ed"/></svg>
  <div class="active"><svg width="48" height="40" viewBox="828 728 48 40"><use href="#palette" x="838" y="735" width="25" height="25"/><path d="M828 766h48v2h-48z" fill="#76b9ed"/></svg></div>
  <svg class="push" width="38" height="40" viewBox="1000 728 38 40"><circle cx="1020" cy="745" r="6" fill="#f79a2b"/><circle cx="1024.500" cy="740" r="3.500" fill="#d6261f"/><path d="M1008 759c-4-2-2-8 2-8 1-7 9-7 11-2 8 0 8 9 3 10z" fill="url(#cloud)"/></svg>
  <span class="temp">32°C</span>
  <svg width="141" height="40" viewBox="1072 728 141 40"><g fill="none" stroke="#fff" stroke-width="1.200"><path d="M1094 751l5-5.500 5 5.500M1119.500 744.500h6v8h-6zM1125.500 747l3-2v7l-3-2M1119 742q4-3 7 0M1119 755q4 3 7 0"/><path d="M1142 754q2-9 11-11M1145 755q2-7 8-8M1148 755q1-4 5-4"/><path d="M1190.500 744.500h10v8h-10z"/></g><circle cx="1151.500" cy="754" r="1.500" fill="#fff"/><path d="M1164 752c-2-3 0-5 2-5 1-4 7-4 8 0 3 0 4 3 2 5z" fill="#bbb"/><circle cx="1174" cy="752" r="4.500" fill="#777"/><path d="M1172.500 750v4M1175.500 750v4" stroke="#fff"/><path d="M1192 746h6v5h-6z" fill="#fff"/><path d="M1188 742v3M1191 742v3M1187 745h5v3q-2 2-4 0z" fill="#fff" stroke="#fff"/></svg>
  <span class="lang">ENG</span>
  <span class="clock"><span class="time">14:47</span><br>25-04-2023</span>
  <svg width="50" height="40" viewBox="1316 728 50 40"><path d="M1327 740h16v13h-10l-3 3v-3h-3z" fill="#fff"/><path d="M1330 743.500h10M1330 746.500h10M1330 749.500h7" stroke="#222"/><circle cx="1341" cy="755" r="7.500" fill="#3c3c3e" stroke="#888"/><text x="1341" y="759" text-anchor="middle" fill="#fff" font-size="11">2</text><path d="M1361.500 728v40" stroke="#7a6a76"/></svg>
</footer>
</body>
</html>
```

FILE: styles.css
```css
* { box-sizing: border-box; }
body { margin: 0; width: 1366px; height: 768px; overflow: hidden; display: flex; flex-direction: column; background: #fff; font: 11px/14px "Open Sans", "Noto Sans", sans-serif; color: #222; white-space: nowrap; }
svg { display: block; flex: none; }
.defs { position: absolute; }
.push { margin-left: auto; }

/* Paint window */
.titlebar { height: 23px; flex: none; display: flex; align-items: center; }
.doc-title { margin-left: 2px; color: #000; font-size: 11.5px; }
.tabs { height: 24px; flex: none; display: flex; border-bottom: 1px solid #dadbdc; }
.tab { height: 23px; line-height: 23px; text-align: center; color: #333; }
.file { width: 56px; background: #1979ca; color: #fff; }
.home { width: 58px; height: 24px; background: #f5f6f7; border: 1px solid #dadbdc; border-bottom: 0; }
.view { width: 55px; }
.ribbon { height: 92px; flex: none; display: flex; background: #f5f6f7; border-bottom: 1px solid #d5d7db; color: #333; }
.group { height: 86px; margin-top: 2px; border-right: 1px solid #e1e2e3; padding-top: 2px; display: flex; flex-direction: column; }
.tools { display: flex; flex: none; height: 69px; }
.cap { height: 16px; line-height: 18px; text-align: center; color: #5c5c5c; }
.big { display: flex; flex: none; flex-direction: column; align-items: center; height: 69px; text-align: center; line-height: 13px; }
.big > span { padding-top: 1px; }
.dn { fill: #222; margin-top: 3px; }
.dn.r { margin: 0 0 0 3px; }
.minis { display: flex; flex-direction: column; }
.mini { height: 22px; display: flex; align-items: center; }
.off { color: #8c8c8c; }
.off .dn { fill: #aaa; }
.g-clip { width: 107px; }
.g-clip .cap { padding-right: 1px; }
.paste { width: 49px; margin: 0 0 0 2px; }
.g-image { width: 122px; }
.g-image .cap { padding-right: 3px; line-height: 19px; }
.select { width: 42px; height: 66px; margin: 0 4px; background: #c9e0f7; border: 1px solid #62a2e4; }
.g-tools { width: 80px; }
.g-tools .block { margin-top: -4px; }
.g-tools .cap { padding-right: 2px; }
.g-brush { width: 56px; }
.g-brush .big { padding-right: 3px; }
.g-shapes { width: 246px; }
.g-shapes .tools { padding-left: 5px; gap: 5px; }
.g-shapes .cap { padding-right: 2px; }
.g-size { width: 53px; }
.g-size .big { padding-right: 4px; }
.g-colors { width: 357px; }
.g-colors .cap { padding-right: 3px; }
.c1 { width: 42px; height: 66px; margin-left: 4px; background: #c9e0f7; border: 1px solid #62a2e4; }
.c1 > span { margin-top: -1px; }
.swatch { display: block; border: 1px solid #868686; box-shadow: inset 0 0 0 1px #fff; }
.s1 { width: 32px; height: 32px; margin: 2px 0 3px; background: #000; }
.s2 { width: 24px; height: 24px; margin: 7px 0 7px; background: #fff; }
.c2 { width: 38px; margin: 0 4px 0 1px; }
.palette { display: grid; grid-template-columns: repeat(10, 20px); grid-auto-rows: 20px; gap: 2px; margin-top: 1px; }
.palette i { border: 1px solid #a0a0a0; box-shadow: inset 0 0 0 1px #f5f6f7; }
.k0 { background: #000; } .k1 { background: #7f7f7f; } .k2 { background: #880015; } .k3 { background: #ed1c24; } .k4 { background: #ff7f27; }
.k5 { background: #fff200; } .k6 { background: #22b14c; } .k7 { background: #00a2e8; } .k8 { background: #3f48cc; } .k9 { background: #a349a4; }
.l0 { background: #fff; } .l1 { background: #c3c3c3; } .l2 { background: #b97a57; } .l3 { background: #ffaec9; } .l4 { background: #ffc90e; }
.l5 { background: #efe4b0; } .l6 { background: #b5e61d; } .l7 { background: #99d9ea; } .l8 { background: #7092be; } .l9 { background: #c8bfe7; }
.edit { width: 42px; }
.g-3d { width: 62px; }
.g-3d .big { padding-right: 4px; }

/* Canvas with the opened picture */
.workspace { height: 546px; flex: none; display: flex; padding: 0 0 0 5px; background: linear-gradient(#c5cfe0, #dce6f4); }
.app { width: 1344px; height: 541px; margin-top: 5px; background: #f5f5f5; overflow: hidden; }
.app-title { height: 23px; display: flex; align-items: center; background: #fff; color: #000; letter-spacing: .08px; }
.menu { height: 20px; line-height: 21px; background: #fff; color: #000; padding-left: 8px; display: grid; grid-template-columns: 34px 40px 72px 73px 43px 59px 40px 54px 48px 60px 40px; }
.toolbar { height: 41px; display: flex; align-items: center; font-family: Roboto, sans-serif; font-size: 14px; color: #333; }
.ln { fill: none; stroke: #666; stroke-width: 1; }
.ln.b { stroke-width: 1.4; }
.ln.dim { stroke: #b8b8b8; }
.fl { fill: #666; }
.dimf { fill: #b0b0b0; }
.sep { width: 1px; height: 34px; background: #d4d4d4; }
.fit { width: 104px; height: 23px; border: 1px solid #555; border-radius: 2px; display: flex; color: #666; line-height: 20px; }
.fit span { width: 85px; padding-left: 7px; font-size: 13.5px; letter-spacing: .1px; }
.fit i { width: 17px; border-left: 1px solid #ddd; display: flex; align-items: center; justify-content: center; }
.fitsep { margin-left: 15px; }
.showme { width: 61px; font-size: 13.5px; letter-spacing: -.1px; }

.body { height: 457px; display: flex; font-family: Roboto, sans-serif; font-size: 12.5px; }
.data { width: 210px; background: #fff; border-top: 1px solid #d4d4d4; border-right: 1px solid #d4d4d4; }
.dtabs { height: 26px; line-height: 25px; display: flex; font-size: 14px; }
.dtabs b { width: 77px; padding-left: 18px; color: #000; font-weight: 700; }
.dtabs span { flex: 1; display: flex; align-items: center; justify-content: space-between; padding: 0 5px 0 12px; background: #fafafa; border-left: 1px solid #d4d4d4; border-bottom: 1px solid #d4d4d4; color: #444; font-size: 13.5px; }
.source { height: 30px; display: flex; align-items: center; border-bottom: 1px solid #e0e0e0; color: #666; letter-spacing: -.07px; }
.find { display: flex; padding: 8px 0 0 8px; height: 31px; }
.search { width: 130px; height: 23px; border: 1px solid #ccc; border-radius: 2px; padding: 0 6px; display: flex; align-items: center; justify-content: space-between; color: #a0a0a0; }
h2 { margin: 0; padding: 8px 0 0 18px; height: 29px; font-size: 13.3px; line-height: 18px; letter-spacing: .2px; color: #000; }
.fields { margin: 0; padding: 0; list-style: none; letter-spacing: .15px; }
.fields li { height: 21px; display: flex; align-items: center; padding-left: 22px; color: #3c3c3c; }
.fields li svg { color: #3f82a8; margin: 1px 12px 0 0; }
.fields li svg.wide { margin: 0 9px 0 -1px; }
.fields li.m svg { color: #45a881; }
.fields em { width: 27px; margin-left: -1px; font: 700 9px/22px Roboto, sans-serif; color: #3f82a8; letter-spacing: 0; }
.fields li em + i { margin-left: -1px; }
.measures { margin: 1px 6px 0 15px; border-top: 1px solid #ddd; }
.measures li { padding-left: 7px; }

.cards { width: 154px; margin-left: 6px; display: flex; flex-direction: column; gap: 6px; }
.card { border: 1px solid #d4d4d4; background: #fafafa; padding: 6px 4px 0 6px; line-height: 18px; color: #666; letter-spacing: .1px; }
.pages { height: 62px; }
.filters { height: 78px; }
.marks { height: 207px; padding-right: 6px; }
.pill { display: block; background: #4996b2; color: #fff; height: 20px; border-radius: 10px; line-height: 19px; padding-left: 10.5px; letter-spacing: .2px; }
.filters .pill { margin: 8px 0 0 -2px; }
.mtype { margin-top: 11px; height: 21px; border: 1px solid #ccc; border-radius: 2px; display: flex; align-items: center; padding-left: 11px; font-size: 11.5px; }
.mtype span { flex: 1; padding-left: 5px; }
.mtype i { width: 18px; height: 19px; border-left: 1px solid #ddd; display: flex; align-items: center; justify-content: center; fill: #555; }
.mgrid { display: grid; grid-template-columns: 43px 42px 43px; gap: 6px 6px; margin-top: 6px; color: #3c3c3c; font-size: 11.5px; letter-spacing: 0; }
.mgrid div { height: 42px; border: 1px solid #d4d4d4; display: flex; flex-direction: column; align-items: center; padding: 6px 1px 0 0; line-height: 18px; }

.sheet { width: 968px; margin-left: 6px; display: flex; flex-direction: column; gap: 6px; }
.shelf { height: 28px; border: 1px solid #d4d4d4; border-right: 0; background: #fafafa; display: flex; align-items: center; color: #666; letter-spacing: 0; }
.shelf div { width: 125px; height: 26px; border-right: 1px solid #d4d4d4; display: flex; align-items: center; }
.shelf .pill { width: 148px; margin-left: 2px; }
.shelf .green { background: #00b180; }
.viz { height: 389px; border: 1px solid #d4d4d4; border-width: 1px 0 0 1px; background: #fff; }
.viz svg { font-family: "Open Sans", "Noto Sans", sans-serif; }
.vt { font-size: 24px; font-weight: 700; font-style: italic; fill: #333; }
.vl { font-size: 11.5px; fill: #333; }
.ax { font-size: 11.5px; fill: #888; }
.xl { font-size: 12px; fill: #777; }

.vscroll { width: 16px; margin-left: 1px; background: #f0f0f0; }
.vscroll i { display: block; height: 359px; background: #cdcdcd; }
.vscroll .down { margin-top: 154px; }
.hscroll { height: 17px; flex: none; display: flex; background: #f0f0f0; }
.hscroll i { width: 1288px; height: 15px; margin-top: 1px; background: #cdcdcd; }
.status { height: 26px; flex: none; display: flex; border-top: 1px solid #d7d7d7; background: #f0f0f0; color: #222; }
.status div { width: 156px; border-right: 1px solid #d7d7d7; margin-bottom: 1px; display: flex; align-items: center; }
.status div > svg + .dims { margin-left: -1px; }
.status .zoom { width: 199px; margin-left: auto; border-right: 0; border-left: 1px solid #d7d7d7; }
.zoom span { width: 49px; padding-left: 21px; }

/* Windows taskbar */
.taskbar { height: 40px; flex: none; display: flex; color: #fff; background: linear-gradient(90deg, #301a24 0, #2f1a23 48px, #373831 340px, #26292a 600px, #242426 850px, #202126 980px, #292c39 1050px, #242430 1150px, #2b1526 1366px); }
.tsearch { width: 288px; height: 40px; display: flex; align-items: center; background: #f2f2f2; border: 1px solid #c0c0c0; border-left: 0; color: #333; font-size: 14px; }
.tsearch span { letter-spacing: -.03px; }
.active { background: #4d4f52; }
.temp, .lang { line-height: 40px; font-size: 13px; }
.temp { width: 34px; }
.lang { width: 29px; font-size: 11.5px; }
.clock { width: 74px; text-align: center; line-height: 18px; padding-top: 2px; margin-left: -1px; margin-right: 1px; }
.time { letter-spacing: -.2px; }
```
